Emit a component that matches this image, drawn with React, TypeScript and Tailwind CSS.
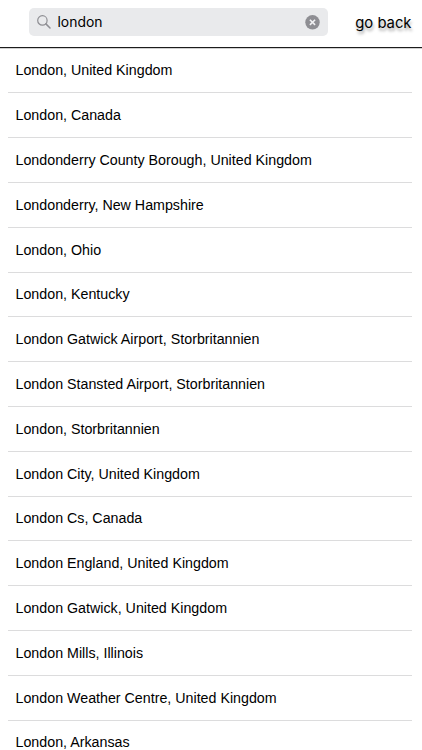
import { useState } from 'react'

const RESULTS = [
  'London, United Kingdom',
  'London, Canada',
  'Londonderry County Borough, United Kingdom',
  'Londonderry, New Hampshire',
  'London, Ohio',
  'London, Kentucky',
  'London Gatwick Airport, Storbritannien',
  'London Stansted Airport, Storbritannien',
  'London, Storbritannien',
  'London City, United Kingdom',
  'London Cs, Canada',
  'London England, United Kingdom',
  'London Gatwick, United Kingdom',
  'London Mills, Illinois',
  'London Weather Centre, United Kingdom',
  'London, Arkansas',
]

function SearchBar({ value, onChange }: { value: string; onChange: (value: string) => void }) {
  return (
    <div className="flex h-7 w-[299px] items-center rounded-[5px] bg-[#e9eaec] px-2">
      <svg width="14" height="14" viewBox="0 0 14 14" fill="none" stroke="#8e8e93" className="shrink-0">
        <circle cx="5.4" cy="5.4" r="4.7" strokeWidth="1.2" />
        <path d="M8.9 8.9l4.1 4.1" strokeWidth="1.5" strokeLinecap="round" />
      </svg>
      <input
        value={value}
        onChange={e => onChange(e.target.value)}
        className="ml-[6.5px] min-w-0 flex-1 bg-transparent pb-px font-['Inter',sans-serif] text-[13.9px] leading-5 text-black outline-none"
      />
      <button onClick={() => onChange('')} aria-label="Clear">
        <svg width="15" height="15" viewBox="0 0 15 15">
          <circle cx="7.5" cy="7.3" r="7.2" fill="#8e8e93" />
          <path d="M4.9 4.7l5.2 5.2M10.1 4.7l-5.2 5.2" stroke="#f1f1f3" strokeWidth="1.6" />
        </svg>
      </button>
    </div>
  )
}

export default function App() {
  const [query, setQuery] = useState('london')

  return (
    <div className="h-[750px] w-[422px] overflow-hidden bg-white font-['Liberation_Sans',Arial,sans-serif] text-black">
      {/* Header */}
      <header className="flex h-12 items-start justify-between border-b border-[#1c1c1c] pt-2 pr-[10.5px] pl-[29px] shadow-[0_1px_0_#d0d0d0]">
        <SearchBar value={query} onChange={setQuery} />
        <button className="font-['Inter',sans-serif] text-[14.8px] leading-[30px] [text-shadow:1px_3px_3px_rgba(0,0,0,0.35)]">
          go back
        </button>
      </header>

      {/* Results */}
      <ul className="pt-[0.7px] pr-[10px] pl-2">
        {RESULTS.map(name => (
          <li
            key={name}
            className="flex h-[44.8px] items-center border-b border-[#dcdcdd] pt-px pl-[7.5px] text-[14.25px]"
          >
            {name}
          </li>
        ))}
      </ul>
    </div>
  )
}
